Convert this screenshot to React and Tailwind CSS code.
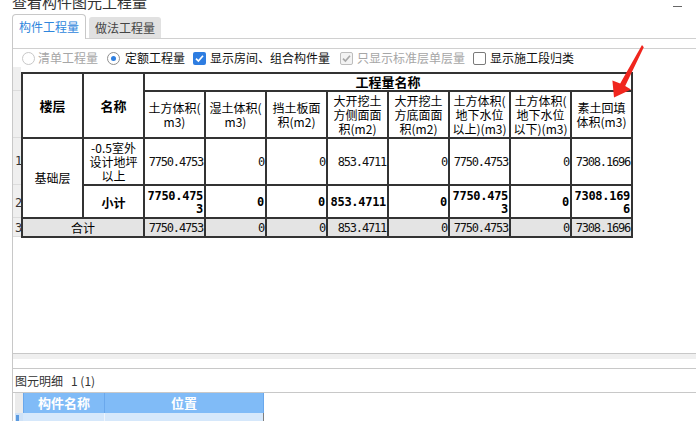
import React from "react";

const cjk = "font-['Noto_Sans_CJK_SC','Noto_Sans',sans-serif]";
const mono = "font-['DejaVu_Sans_Mono',monospace]";

function Radio({ checked, disabled }) {
  return (
    <div
      className={
        disabled
          ? "w-[13px] h-[13px] rounded-full border border-[#c8c8c8] bg-white shrink-0"
          : "w-[13px] h-[13px] rounded-full border border-[#8f8f8f] bg-white shrink-0 flex items-center justify-center"
      }
    >
      {checked && <div className="w-[5px] h-[5px] rounded-full bg-[#2f7fe0]" />}
    </div>
  );
}

function Check({ color }) {
  return (
    <svg width="11" height="11" viewBox="0 0 11 11">
      <path d="M2 5.6 L4.4 8 L9 2.8" fill="none" stroke={color} strokeWidth="1.7" />
    </svg>
  );
}

const headers = [
  ["土方体积(", "m3)"],
  ["湿土体积(", "m3)"],
  ["挡土板面", "积(m2)"],
  ["大开挖土", "方侧面面", "积(m2)"],
  ["大开挖土", "方底面面", "积(m2)"],
  ["土方体积(", "地下水位", "以上)(m3)"],
  ["土方体积(", "地下水位", "以下)(m3)"],
  ["素土回填", "体积(m3)"],
];

const vals = ["7750.4753", "0", "0", "853.4711", "0", "7750.4753", "0", "7308.1696"];
const bold = [["7750.475", "3"], ["0"], ["0"], ["853.4711"], ["0"], ["7750.475", "3"], ["0"], ["7308.169", "6"]];

function Num({ v, gray }) {
  return (
    <div
      className={`${gray ? "bg-[#e4e4e4]" : "bg-white"} flex items-center justify-end pr-[1px] ${mono} text-[12px] leading-[14px] tracking-[-1.2px] text-[#111] whitespace-nowrap`}
    >
      {v}
    </div>
  );
}

function BoldNum({ lines }) {
  return (
    <div className={`bg-white flex flex-col items-end justify-center pr-[1px] pt-[2px] ${mono} font-bold text-[12px] leading-[13px] tracking-[-0.3px] text-black whitespace-nowrap`}>
      {lines.map((l, i) => (
        <div key={i}>{l}</div>
      ))}
    </div>
  );
}

export default function App() {
  return (
    <div className={`relative w-[696px] h-[421px] overflow-hidden bg-white text-[#222] ${cjk}`}>
      {/* title bar */}
      <div className="flex items-start h-[14px] overflow-hidden pl-[12px]">
        <div className="mt-[-6px] text-[15px] leading-[16px] text-[#333] whitespace-nowrap">查看构件图元工程量</div>
        <div className="ml-auto mr-[14px] mt-[6px] w-[9px] h-px bg-[#666]" />
      </div>

      {/* tabs */}
      <div className="flex h-[25px]">
        <div className="ml-[12px] w-[74px] h-[25px] border border-b-0 border-[#c8c8c8] rounded-t-[4px] bg-white flex items-center justify-center text-[12px] text-[#2f86dc]">
          构件工程量
        </div>
        <div className="flex-1 flex border-b border-[#d0d0d0]">
          <div className="ml-[3px] mt-[3px] w-[72px] h-[21px] bg-[#e1e1e1] rounded-t-[3px] flex items-center justify-center text-[12px] text-[#444]">
            做法工程量
          </div>
        </div>
      </div>

      {/* panel */}
      <div className="ml-[12px] border-l border-[#c8c8c8] h-[382px] flex flex-col">
        <div className="h-[9px] shrink-0" />
        {/* options */}
        <div className="h-[19px] shrink-0 border-t border-[#d0d0d0] flex items-center pl-[9px] text-[12px] leading-[14px] whitespace-nowrap">
          <Radio disabled />
          <span className="ml-[3px] text-[#a6a6a6]">清单工程量</span>
          <div className="ml-[9px]">
            <Radio checked />
          </div>
          <span className="ml-[5px] text-[#111]">定额工程量</span>
          <div className="ml-[8px] w-[13px] h-[13px] rounded-[2px] bg-[#2e7de1] flex items-center justify-center">
            <Check color="#ffffff" />
          </div>
          <span className="ml-[4px] text-[#111]">显示房间、组合构件量</span>
          <div className="ml-[10px] w-[13px] h-[13px] rounded-[2px] border border-[#bdbdbd] bg-[#f3f3f3] flex items-center justify-center">
            <Check color="#a8a8a8" />
          </div>
          <span className="ml-[4px] text-[#a6a6a6]">只显示标准层单层量</span>
          <div className="ml-[8px] w-[13px] h-[13px] rounded-[2px] border border-[#7a7a7a] bg-white" />
          <span className="ml-[4px] text-[#111]">显示施工段归类</span>
        </div>

        {/* grid area */}
        <div className="h-[286px] shrink-0 flex items-start">
          <div className={`w-[8px] flex flex-col bg-[#efefef] ${mono} text-[12px] leading-[12px] text-[#333]`}>
            <div className="h-[24px] border-b border-[#dcdcdc]" />
            <div className="h-[47px] border-b border-[#dcdcdc]" />
            <div className="h-[47px] border-b border-[#dcdcdc] flex items-center pl-[2px]">1</div>
            <div className="h-[33px] border-b border-[#dcdcdc] flex items-center pl-[2px] pt-[3px]">2</div>
            <div className="h-[19px] border-b border-[#dcdcdc] flex items-center pl-[2px] pt-[2px]">3</div>
          </div>
          <div className="mt-[5px] grid grid-cols-[repeat(10,59px)] grid-rows-[16px_45px_45px_31px_17px] gap-[2px] bg-[#333] border-2 border-[#333] text-black">
            <div className="row-span-2 bg-white flex items-center justify-center text-[13px] font-bold">楼层</div>
            <div className="row-span-2 bg-white flex items-center justify-center text-[13px] font-bold">名称</div>
            <div className="col-span-8 bg-white flex items-center justify-center text-[13px] leading-[14px] font-bold">工程量名称</div>
            {headers.map((h, i) => (
              <div key={i} className="bg-white flex flex-col items-center justify-center text-[12px] leading-[14px] whitespace-nowrap">
                {h.map((l, j) => (
                  <div key={j}>{l}</div>
                ))}
              </div>
            ))}
            <div className="row-span-2 bg-white flex items-center justify-center text-[12px]">基础层</div>
            <div className="bg-white flex flex-col items-center justify-center text-[12px] leading-[14px] whitespace-nowrap">
              <div>-0.5室外</div>
              <div>设计地坪</div>
              <div>以上</div>
            </div>
            {vals.map((v, i) => (
              <Num key={i} v={v} />
            ))}
            <div className="bg-white flex items-center justify-center text-[12px] font-bold pt-[2px]">小计</div>
            {bold.map((b, i) => (
              <BoldNum key={i} lines={b} />
            ))}
            <div className="col-span-2 bg-[#e4e4e4] flex items-center justify-center text-[12px] leading-[14px]">合计</div>
            {vals.map((v, i) => (
              <Num key={i} v={v} gray />
            ))}
          </div>
        </div>

        {/* horizontal scroll band */}
        <div className="h-[6px] shrink-0 border-t border-[#c8c8c8] bg-[#efefef]" />
        <div className="h-[9px] shrink-0" />
        {/* detail label */}
        <div className="h-[24px] shrink-0 border-t border-[#c8c8c8] flex items-center pl-[2px] text-[12px] text-[#333] whitespace-nowrap">
          <span>图元明细</span>
          <span className="ml-[8px]">1 (1)</span>
        </div>
        {/* bottom table */}
        <div className="flex-1 border-t border-[#c8c8c8] pl-[2px] flex items-start">
          <div className="w-[8px] flex flex-col">
            <div className="h-[20px] bg-[#ebebeb]" />
            <div className="h-[20px] bg-[#cfe2f7] flex">
              <div className="ml-[1px] mt-[2px] w-[3px] h-[12px] bg-[#5c9be0]" />
            </div>
          </div>
          <div className="w-[241px] flex flex-col">
            <div className="h-[20px] flex bg-[#80bbf7] border-l border-r border-[#6aa8ec] text-white font-bold text-[13px] leading-[14px]">
              <div className="w-[81px] border-r border-[#6aa8ec] flex items-center justify-center">构件名称</div>
              <div className="flex-1 flex items-center justify-center">位置</div>
            </div>
            <div className="h-[20px] flex bg-[#d6e8fb] border-r border-[#7f7f7f] text-[12px] text-black whitespace-nowrap overflow-hidden">
              <div className="w-[82px] border-r border-[#eef5fd] flex items-center pl-[9px] pt-[10px]">-0.5室外设</div>
              <div className="flex-1 flex items-center pl-[12px] pt-[10px]">-0.0496,5.9688</div>
            </div>
          </div>
        </div>
      </div>

      {/* red annotation arrow */}
      <svg className="absolute left-0 top-0 pointer-events-none" width="696" height="421">
        <polygon points="642,45 643.8,47.2 625.2,86 631,89.5 614,97.5 612.4,80.5 620.2,83.6" fill="#f0261e" />
      </svg>
    </div>
  );
}
